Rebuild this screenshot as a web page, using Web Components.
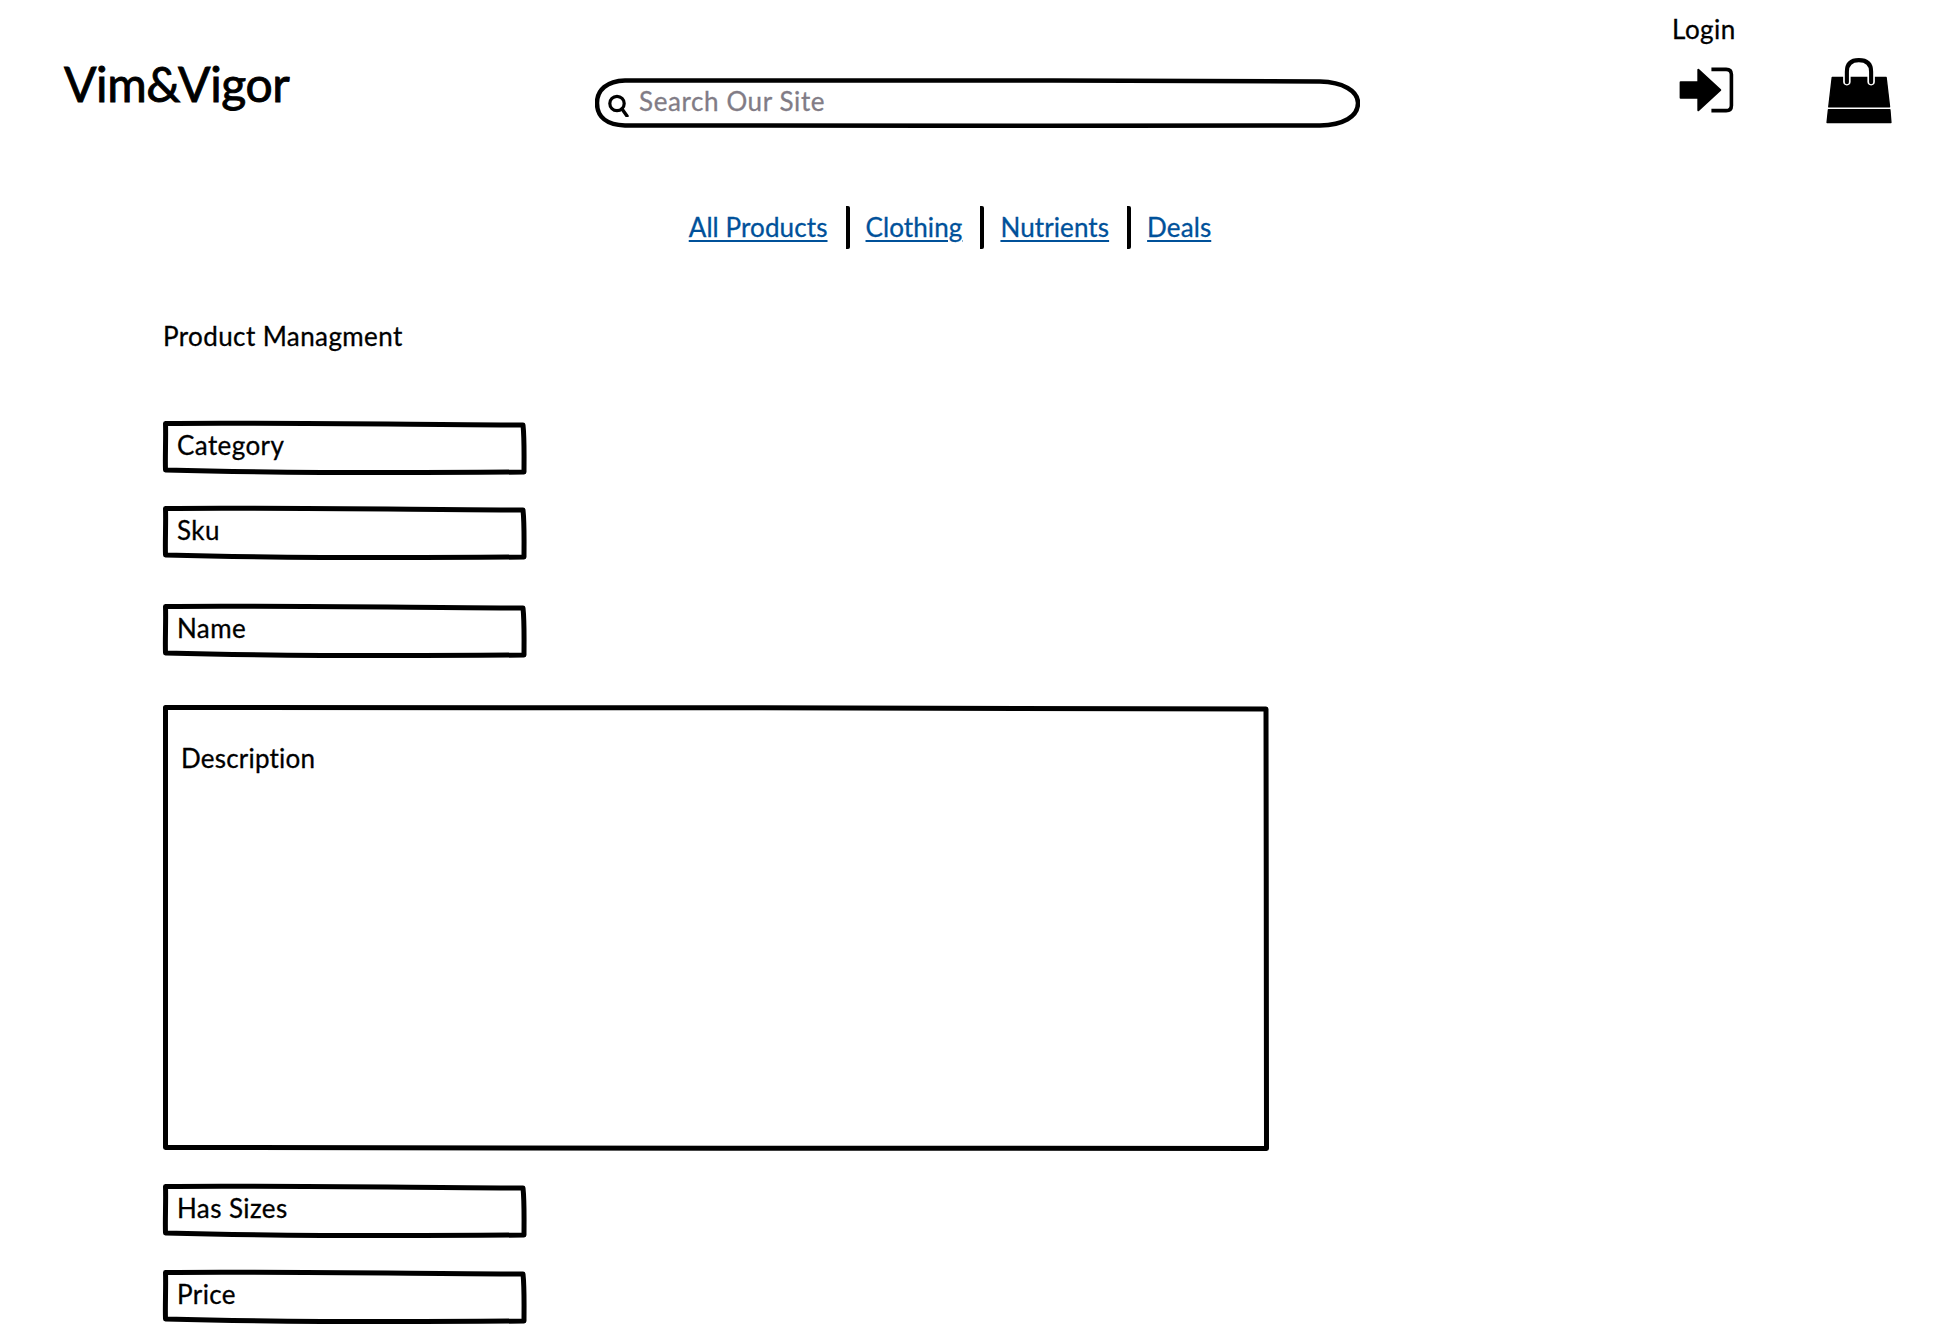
<!DOCTYPE html>
<html>
<head>
<meta charset="utf-8">
<title>Vim&amp;Vigor</title>
<style>
  html, body { margin: 0; background: #fff; }
  body { font-family: "Lato", "Noto Sans", sans-serif; color: #000; -webkit-text-stroke: 0.3px currentColor; }
</style>
</head>
<body>
<vv-page>
  <vv-header slot="header"></vv-header>
  <vv-nav slot="nav">
    <a href="#">All Products</a>
    <a href="#">Clothing</a>
    <a href="#">Nutrients</a>
    <a href="#">Deals</a>
  </vv-nav>
  <vv-form slot="form" heading="Product Managment">
    <vv-field style="margin-top:0">Category</vv-field>
    <vv-field style="margin-top:33px">Sku</vv-field>
    <vv-field style="margin-top:46px">Name</vv-field>
    <vv-area style="margin-top:49px">Description</vv-area>
    <vv-field style="margin-top:33px">Has Sizes</vv-field>
    <vv-field style="margin-top:34px">Price</vv-field>
  </vv-form>
</vv-page>

<script>
class VvPage extends HTMLElement {
  constructor() {
    super();
    this.attachShadow({ mode: 'open' }).innerHTML = `
      <style>
        :host { display: block; width: 1956px; height: 1329px; overflow: hidden; }
      </style>
      <slot name="header"></slot>
      <slot name="nav"></slot>
      <slot name="form"></slot>
    `;
  }
}

class VvHeader extends HTMLElement {
  constructor() {
    super();
    this.attachShadow({ mode: 'open' }).innerHTML = `
      <style>
        :host {
          display: grid;
          grid-template-columns: 531px 765px 464px 1fr;
          height: 130px;
          padding-left: 64px;
          box-sizing: border-box;
        }
        .logo {
          font-size: 48px;
          line-height: 60px;
          margin-top: 54px;
          letter-spacing: -0.4px;
          -webkit-text-stroke: 0.9px currentColor;
          white-space: nowrap;
        }
        vv-search { margin-top: 78px; }
        .login {
          font-size: 26px;
          line-height: 30px;
          margin: 14px 0 0 312px;
          letter-spacing: 0.5px;
        }
        .login svg { display: block; width: 59px; height: 50px; margin: 21px 0 0 5px; }
        .bag { display: block; width: 70px; height: 69px; margin-top: 56px; }
      </style>
      <div class="logo">Vim&amp;Vigor</div>
      <vv-search>Search Our Site</vv-search>
      <div class="login">
        Login
        <svg viewBox="230 195 180 150">
          <path fill="#000" stroke="#000" stroke-width="6" stroke-linejoin="round"
            d="M241 246H295V208L362 270L295 332V294H241Z"/>
          <path fill="none" stroke="#000" stroke-width="11"
            d="M335 207H380Q396 207 396 223V317Q396 333 380 333H335"/>
        </svg>
      </div>
      <svg class="bag" viewBox="675 170 205 200">
        <path fill="#000" stroke="#000" stroke-width="4" stroke-linejoin="round"
          d="M699 232H857L867 318H689Z"/>
        <path fill="#000" stroke="#000" stroke-width="4" stroke-linejoin="round"
          d="M688 326H868L871 364H684Z"/>
        <path fill="none" stroke="#fff" stroke-width="22" stroke-linecap="round"
          d="M742 244V222"/>
        <path fill="none" stroke="#fff" stroke-width="22" stroke-linecap="round"
          d="M813 244V222"/>
        <path fill="none" stroke="#000" stroke-width="12" stroke-linecap="round"
          d="M742 246V215Q742 181 777 181Q813 181 813 215V246"/>
      </svg>
    `;
  }
}

class VvSearch extends HTMLElement {
  constructor() {
    super();
    this.attachShadow({ mode: 'open' }).innerHTML = `
      <style>
        :host {
          display: flex;
          align-items: center;
          position: relative;
          width: 765px;
          height: 50px;
          box-sizing: border-box;
          padding-left: 12px;
          gap: 10px;
          color: #817c86;
          font-size: 26px;
          letter-spacing: 0.6px;
        }
        .outline { position: absolute; inset: 0; width: 100%; height: 100%; }
        .glass { width: 22px; height: 24px; margin-top: 4px; flex: none; }
        span { position: relative; margin-top: -5px; }
      </style>
      <svg class="outline" viewBox="0 0 765 50">
        <path fill="none" stroke="#000" stroke-width="4.500"
          d="M30 2.500C200 1.500 500 2.500 725 3.500C748 4 763 13 763 25C763 39 748 47 725 47.500C500 48 200 48 30 47.500C12 47 2 39 2 25C2 12 12 3 30 2.500Z"/>
      </svg>
      <svg class="glass" viewBox="0 0 22 24">
        <circle cx="10" cy="10.500" r="7.200" fill="none" stroke="#000" stroke-width="3.200"/>
        <path d="M15 16L20 23" stroke="#000" stroke-width="3.400" stroke-linecap="round"/>
      </svg>
      <span><slot></slot></span>
    `;
  }
}

class VvNav extends HTMLElement {
  constructor() {
    super();
    this.attachShadow({ mode: 'open' }).innerHTML = `
      <style>
        :host {
          display: flex;
          justify-content: center;
          align-items: center;
          height: 44px;
          margin-top: 75px;
          padding-right: 54px;
          font-size: 26px;
          letter-spacing: 0.1px;
        }
        ::slotted(a) {
          color: #00519a;
          text-decoration: underline;
          text-decoration-thickness: 2px;
          text-underline-offset: 3px;
          white-space: nowrap;
          padding: 0 18px 0 16px;
          line-height: 43px;
          border-right: 4px solid #000;
          border-radius: 2px;
        }
        ::slotted(a:last-child) { border-right: none; }
      </style>
      <slot></slot>
    `;
  }
}

class VvForm extends HTMLElement {
  constructor() {
    super();
    this.attachShadow({ mode: 'open' }).innerHTML = `
      <style>
        :host { display: block; padding: 72px 0 0 163px; }
        h1 {
          margin: 0 0 70px;
          font-size: 26px;
          line-height: 30px;
          font-weight: 400;
          letter-spacing: 0.4px;
        }
      </style>
      <h1></h1>
      <slot></slot>
    `;
  }
  connectedCallback() {
    this.shadowRoot.querySelector('h1').textContent = this.getAttribute('heading');
  }
}

class VvField extends HTMLElement {
  constructor() {
    super();
    this.attachShadow({ mode: 'open' }).innerHTML = `
      <style>
        :host {
          display: flex;
          align-items: center;
          position: relative;
          width: 363px;
          height: 52px;
          box-sizing: border-box;
          padding: 0 0 4px 14px;
          font-size: 26px;
          letter-spacing: 0.4px;
        }
        svg { position: absolute; left: 0; top: 0; width: 100%; height: 54px; overflow: visible; }
        span { position: relative; }
      </style>
      <svg viewBox="0 0 363 54">
        <path fill="none" stroke="#000" stroke-width="5" stroke-linejoin="round"
          d="M2.500 2.500C100 1.500 250 3.500 360 4C361.500 18 361 36 361 51C250 52 100 51.500 2.500 49C2 36 3 18 2.500 2.500Z"/>
      </svg>
      <span><slot></slot></span>
    `;
  }
}

class VvArea extends HTMLElement {
  constructor() {
    super();
    this.attachShadow({ mode: 'open' }).innerHTML = `
      <style>
        :host {
          display: block;
          position: relative;
          width: 1105px;
          height: 446px;
          box-sizing: border-box;
          padding: 37px 0 0 18px;
          font-size: 26px;
          line-height: 32px;
          letter-spacing: 0.2px;
        }
        svg { position: absolute; inset: 0; width: 100%; height: 100%; overflow: visible; }
        span { position: relative; }
      </style>
      <svg viewBox="0 0 1105 446">
        <path fill="none" stroke="#000" stroke-width="5" stroke-linejoin="round"
          d="M2.500 2.500C300 1.500 800 3.500 1103 4C1103.500 150 1103 300 1103.500 443.500C800 443.500 300 443 2.500 442.500C2.500 300 2.500 150 2.500 2.500Z"/>
      </svg>
      <span><slot></slot></span>
    `;
  }
}

customElements.define('vv-page', VvPage);
customElements.define('vv-header', VvHeader);
customElements.define('vv-search', VvSearch);
customElements.define('vv-nav', VvNav);
customElements.define('vv-form', VvForm);
customElements.define('vv-field', VvField);
customElements.define('vv-area', VvArea);
</script>
</body>
</html>
